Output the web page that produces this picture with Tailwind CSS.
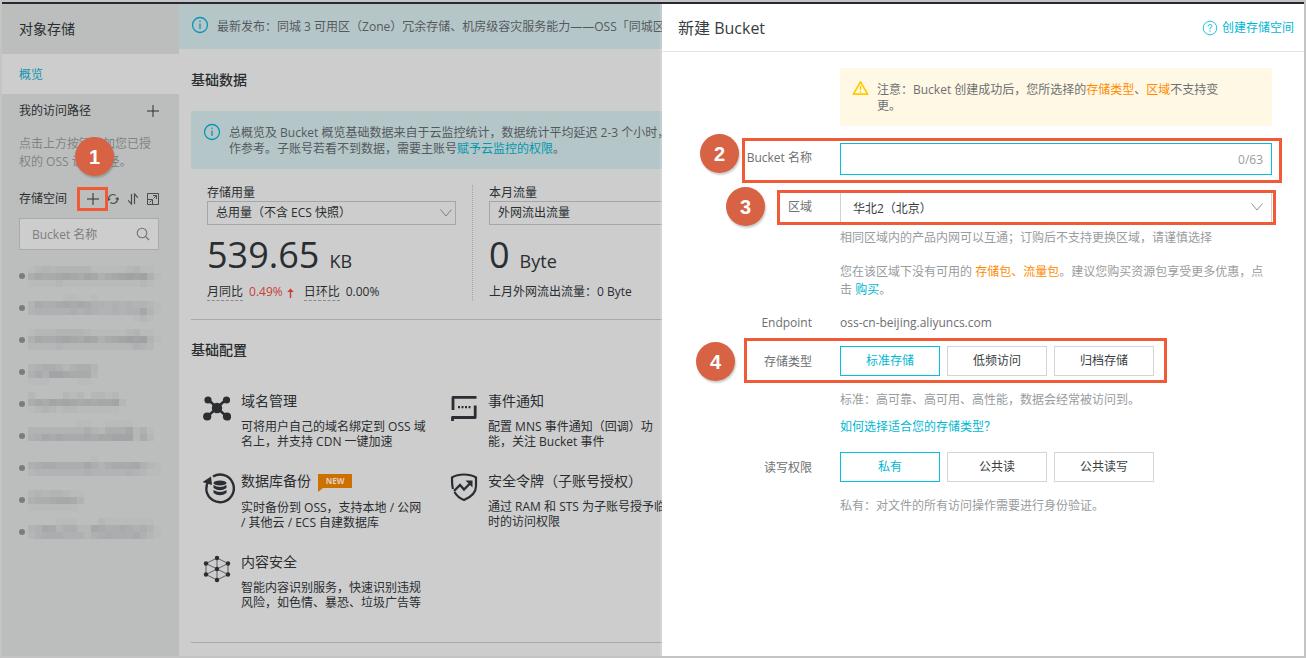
<!DOCTYPE html>
<html lang="zh-CN">
<head>
<meta charset="utf-8">
<meta name="viewport" content="width=device-width, initial-scale=1">
<title>对象存储 - 新建 Bucket</title>
<script src="https://cdn.jsdelivr.net/npm/@tailwindcss/browser@4"></script>
</head>
<body class="bg-[#c4c4c4] font-['Open_Sans','Noto_Sans_CJK_SC',sans-serif] text-xs leading-4 text-[#2a2e31]">
<div class="min-h-screen p-0.5 flex">
<div class="relative flex flex-1 border-t-2 border-[#262b33] overflow-hidden">

  <!-- Sidebar -->
  <aside class="w-[177px] shrink-0 bg-[#bbbebd]">
    <h1 class="h-[50px] pl-[17px] flex items-center text-sm">对象存储</h1>
    <a href="#" class="h-10 pl-[17px] pt-0.5 flex items-center bg-[#cdcdcd] text-[#0c96ae]">概览</a>
    <div class="pl-[17px] pr-5">
      <div class="mt-[9px] flex items-center justify-between">
        <span>我的访问路径</span>
        <button aria-label="添加路径" class="size-3">
          <svg viewBox="0 0 12 12" class="size-3" stroke="#2a2e31" fill="none"><path d="M6 0v12M0 6h12"/></svg>
        </button>
      </div>
      <div class="relative">
        <p class="mt-4 leading-[18px] text-[#818483] whitespace-nowrap">点击上方按钮添加您已授<br>权的 OSS 访问路径。</p>
        <span class="absolute left-14 top-0.5 size-[39px] rounded-full bg-[#d86344] shadow-[1px_2px_2px_rgba(0,0,0,0.2)] flex items-center justify-center font-['Liberation_Sans',sans-serif] font-bold text-xl text-white">1</span>
      </div>
      <div class="mt-5 flex items-center">
        <span class="mr-5">存储空间</span>
        <button aria-label="新建 Bucket" class="relative size-3 flex items-center justify-center">
          <svg viewBox="0 0 12 12" class="size-3" stroke="#2a2e31" fill="none"><path d="M6 0v12M0 6h12"/></svg>
          <span class="absolute -left-2.5 -top-1.5 w-[31px] h-6 border-3 border-[#f05a36]"></span>
        </button>
        <div class="flex flex-1 justify-end gap-2">
          <button aria-label="刷新" class="size-3">
            <svg viewBox="0 0 12 12" class="size-3" stroke="#4a4e50" stroke-width="1.2" fill="none"><path d="M1.6 7A4.5 4.5 0 0 1 8.6 2.4M10.4 5A4.5 4.5 0 0 1 3.4 9.6M0 5.4l1.6 1.8 1.8-1.6M12 6.6l-1.6-1.8-1.8 1.6"/></svg>
          </button>
          <button aria-label="排序" class="size-3">
            <svg viewBox="0 0 12 12" class="size-3" stroke="#4a4e50" stroke-width="1.2" fill="none"><path d="M4.5 1v10L1.2 7.4M7.5 11V1l3.3 3.6"/></svg>
          </button>
          <button aria-label="展开" class="size-3">
            <svg viewBox="0 0 12 12" class="size-3" stroke="#4a4e50" fill="none"><path d="M.5.5h11v11H.5zM6 2.5h3.5V6M9.500 2.500L6.500 5.500M.5 6.500h5v5M2.500 9.500l2-2"/></svg>
          </button>
        </div>
      </div>
      <label class="mt-[11px] h-8 flex items-center border border-[#a9abab] bg-[#cdcdcd] pl-3 pr-2">
        <input type="text" aria-label="搜索 Bucket" placeholder="Bucket 名称" class="min-w-0 flex-1 pt-0.5 outline-none placeholder:text-[#7b7e7f]">
        <svg viewBox="0 0 14 14" class="size-3.5" stroke="#6f7273" stroke-width="1.1" fill="none"><circle cx="6" cy="6" r="4.800"/><path d="M9.500 9.500l3.500 3.500"/></svg>
      </label>
      <ul id="buckets" class="mt-2.5"></ul>
    </div>
  </aside>

  <!-- Overview -->
  <main class="flex-1 min-w-0 bg-[#cdcdcd] whitespace-nowrap overflow-hidden">
    <div class="h-[45px] bg-[#b5c6c9] pl-3 flex items-center gap-2 text-[#54595c]">
      <svg viewBox="0 0 18 18" class="size-[18px] shrink-0 -mt-1" stroke="#0c96b4" fill="none" stroke-width="1.300"><circle cx="9" cy="9" r="7.500"/><path d="M9 7.500v5.500M9 4.500v1.500"/></svg>
      <span>最新发布：同城 3 可用区（Zone）冗余存储、机房级容灾服务能力——OSS「同城区域冗余存储」</span>
    </div>
    <div class="pl-3">
      <h2 class="mt-[21px] text-sm font-medium">基础数据</h2>
      <div class="mt-[21px] h-[58px] bg-[#b5c6c9] pl-3 flex gap-2 text-[#54595c]">
        <svg viewBox="0 0 18 18" class="size-[18px] shrink-0 mt-3" stroke="#0c96b4" fill="none" stroke-width="1.300"><circle cx="9" cy="9" r="7.500"/><path d="M9 7.500v5.500M9 4.500v1.500"/></svg>
        <p class="mt-3.5">总概览及 Bucket 概览基础数据来自于云监控统计，数据统计平均延迟 2-3 个小时，仅<br>作参考。子账号若看不到数据，需要主账号<a href="#" class="text-[#0098ae]">赋予云监控的权限</a>。</p>
      </div>
      <div class="mt-4 flex">
        <section class="w-[282px] shrink-0 pl-4 pr-4 border-r border-dotted border-[#a4a4a4]">
          <label for="usage">存储用量</label>
          <div class="relative">
            <select id="usage" class="block w-full h-6 appearance-none border border-[#a6a6a6] pl-2"><option>总用量（不含 ECS 快照）</option></select>
            <svg viewBox="0 0 12 8" class="absolute right-1 top-2 w-3 h-2 pointer-events-none" stroke="#7b7e80" fill="none"><path d="M.5.5L6 7 11.500.5"/></svg>
          </div>
          <div class="mt-1.5 h-12 flex items-baseline gap-2.5"><span class="text-4xl leading-12">539.65</span><span class="text-lg">KB</span></div>
          <div class="mt-[5px] flex text-[#2a2e31]">
            <span class="border-b border-dashed border-[#8b8b8b]">月同比</span>
            <span class="ml-1.5 text-[#c93f36]">0.49%</span>
            <svg viewBox="0 0 7 10" class="w-[7px] h-2.5 mt-1 ml-1" stroke="#c93f36" stroke-width="1.400" fill="#c93f36"><path d="M3.500 10V2"/><path d="M.2 4L3.500.4l3.300 3.600z" stroke="none"/></svg>
            <span class="ml-2.5 border-b border-dashed border-[#8b8b8b]">日环比</span>
            <span class="ml-1.5">0.00%</span>
          </div>
        </section>
        <section class="w-[282px] shrink-0 px-4">
          <label for="traffic">本月流量</label>
          <select id="traffic" class="block w-full h-6 appearance-none border border-[#a6a6a6] pl-2"><option>外网流出流量</option></select>
          <div class="mt-1.5 h-12 flex items-baseline gap-2.5"><span class="text-4xl leading-12">0</span><span class="text-lg">Byte</span></div>
          <p class="mt-[5px]">上月外网流出流量：0 Byte</p>
        </section>
      </div>
      <hr class="mt-[18px] border-[#a9a9a9]">
      <h2 class="mt-5 text-sm font-medium">基础配置</h2>
      <div class="mt-[31px] flex">
        <div class="w-[247px] shrink-0 pl-3 flex flex-col gap-[22px]">
          <article class="flex gap-2.5">
            <svg viewBox="0 0 28 28" class="size-7 shrink-0 mt-[3px]" fill="#2a2e33" stroke="#2a2e33"><path d="M5 5.500l18 16.500M23 5.500L5 22" stroke-width="2.400"/><g stroke="none"><circle cx="14" cy="14" r="5.200"/><circle cx="5" cy="6" r="3.600"/><circle cx="23.500" cy="6" r="3.600"/><circle cx="4.200" cy="22.500" r="4.100"/><circle cx="24" cy="22.500" r="4.100"/></g></svg>
            <div><h3 class="text-sm">域名管理</h3><p class="mt-2 leading-[15px]">可将用户自己的域名绑定到 OSS 域<br>名上，并支持 CDN 一键加速</p></div>
          </article>
          <article class="flex gap-1.5">
            <svg viewBox="0 0 32 32" class="size-8 shrink-0 mt-px" fill="none" stroke="#2a2e33"><path d="M10 4.500A13.800 13.800 0 1 1 3.500 19Q2.800 13.500 5.500 9" stroke-width="2.400"/><path d="M-.5 10L8 4.500 9 13z" fill="#2a2e33" stroke="none"/><g fill="#2a2e33" stroke="none"><ellipse cx="17" cy="11" rx="6.500" ry="2.500"/><path d="M10.500 13q6.500 4 13 0v3q-6.500 4.500-13 0zM10.500 18q6.500 4 13 0v3q-6.500 4.500-13 0z"/></g></svg>
            <div><h3 class="text-sm flex items-center gap-[7px]">数据库备份
              <span class="relative h-3.5 w-[34px] bg-[#cc7000] text-[8px] leading-[14px] font-bold text-center text-[#e2d3c2]">NEW<svg viewBox="0 0 5 4" class="absolute left-0 top-3.5 w-[5px] h-1" fill="#cc7000"><path d="M0 0h5L0 4z"/></svg></span></h3>
              <p class="mt-[9px] leading-[15px]">实时备份到 OSS，支持本地 / 公网<br>/ 其他云 / ECS 自建数据库</p></div>
          </article>
          <article class="flex gap-2.5">
            <svg viewBox="0 0 28 28" class="size-7 shrink-0 mt-[3px]" fill="#2a2e33" stroke="#2a2e33" stroke-width=".7"><path d="M14 3L25 8.500v11L14 25 3 19.500v-11zM14 3v22M3 8.500l22 11M25 8.500l-22 11" fill="none"/><g stroke="none"><circle cx="14" cy="3" r="2.200"/><circle cx="25" cy="8.500" r="2.200"/><circle cx="25" cy="19.500" r="2.200"/><circle cx="14" cy="25" r="2.200"/><circle cx="3" cy="19.500" r="2.200"/><circle cx="3" cy="8.500" r="2.200"/><circle cx="14" cy="14" r="2.200"/></g></svg>
            <div><h3 class="text-sm">内容安全</h3><p class="mt-2 leading-[15px]">智能内容识别服务，快速识别违规<br>风险，如色情、暴恐、垃圾广告等</p></div>
          </article>
        </div>
        <div class="pl-3 flex flex-col gap-[22px]">
          <article class="flex gap-2.5">
            <svg viewBox="0 0 28 28" class="size-7 shrink-0 mt-[3px]" fill="none" stroke="#2a2e33" stroke-width="2.800" stroke-linejoin="round"><path d="M26.500 3.400H3V16M25.200 11.500v12H2.500V27"/><path d="M8 13.200h2m1.500 0h2m1.500 0h2m1.500 0h2" stroke-width="2.200"/></svg>
            <div><h3 class="text-sm">事件通知</h3><p class="mt-2 leading-[15px]">配置 MNS 事件通知（回调）功<br>能，关注 Bucket 事件</p></div>
          </article>
          <article class="flex gap-2.5">
            <svg viewBox="0 0 28 28" class="size-7 shrink-0 mt-0.5" fill="none" stroke="#2a2e33" stroke-width="2.200"><path d="M3 16Q2 13 2 4.500 7 1.500 14 1.500t12 3V13q0 9-12 14Q8 25 4.500 19"/><path d="M4 18l6-6 4 4.500 7-7" stroke-width="2.400"/><path d="M15.500 7.500h7v7z" fill="#2a2e33" stroke="none"/></svg>
            <div><h3 class="text-sm">安全令牌（子账号授权）</h3><p class="mt-2 leading-[15px]">通过 RAM 和 STS 为子账号授予临<br>时的访问权限</p></div>
          </article>
        </div>
      </div>
      <hr class="mt-8 border-[#a9a9a9]">
    </div>
  </main>

  <!-- Drawer -->
  <section class="absolute inset-y-0 right-0 w-[642px] bg-white text-[#6d7072] shadow-[-2px_0_1px_rgba(255,255,255,0.15)]">
    <header class="h-12 border-b border-[#e4e6e6] pl-4 pr-2.5 flex items-center justify-between">
      <h2 class="text-base text-[#373d41]">新建 Bucket</h2>
      <a href="#" class="flex items-center gap-1 text-[#00b7d3]">
        <svg viewBox="0 0 16 16" class="size-4" fill="none" stroke="#20c3dc"><circle cx="8" cy="8" r="6.800"/><path d="M6 6.500Q6 4.500 8 4.500t2 1.800Q10 7.300 8 8.200v1.300M8 10.500v1.300"/></svg>
        创建存储空间</a>
    </header>
    <form class="pt-4 pr-8">
      <div class="ml-[178px] h-[58px] bg-[#fff8e4] pl-3 pr-10 flex gap-2">
        <svg viewBox="0 0 18 16" class="w-[17px] h-4 shrink-0 mt-3" fill="none" stroke="#ffc800" stroke-width="1.800" stroke-linejoin="round"><path d="M9 1.500L16.500 14.500h-15z"/><path d="M9 5.500v4.500M9 11.200v1.500" stroke-width="1.500"/></svg>
        <p class="mt-3.5">注意：Bucket 创建成功后，您所选择的<span class="text-[#ff8a00]">存储类型</span>、<span class="text-[#ff8a00]">区域</span>不支持变<br>更。</p>
      </div>

      <div class="relative mt-[17px] flex gap-7">
        <label for="name" class="w-[150px] shrink-0 mt-[7px] text-right">Bucket 名称</label>
        <div class="relative flex-1">
          <input id="name" type="text" maxlength="63" class="block w-full h-8 border border-[#00c1de] pl-3 pr-12 outline-none">
          <span class="absolute right-[9px] top-[9px] text-[#999c9e]">0/63</span>
        </div>
        <span class="absolute left-20 -right-2.5 -top-[5px] h-[45px] border-3 border-[#f05a36] pointer-events-none"></span>
        <span class="absolute left-[38px] -top-[9px] size-[39px] rounded-full bg-[#d86344] shadow-[1px_2px_2px_rgba(0,0,0,0.2)] flex items-center justify-center font-['Liberation_Sans',sans-serif] font-bold text-xl text-white">2</span>
      </div>

      <div class="relative mt-4 flex gap-7">
        <label for="region" class="w-[150px] shrink-0 mt-2 text-right">区域</label>
        <div class="relative flex-1">
          <select id="region" class="block w-full h-8 appearance-none border border-[#d0d3d4] pl-3 pt-1 text-[#373d41]"><option>华北2（北京）</option></select>
          <svg viewBox="0 0 12 8" class="absolute right-[9px] top-3 w-3 h-2 pointer-events-none" stroke="#8f9294" fill="none"><path d="M.5.5L6 7 11.500.5"/></svg>
        </div>
        <span class="absolute left-[115px] -right-1 -top-px h-[35px] border-3 border-[#f05a36] pointer-events-none"></span>
        <span class="absolute left-16 -top-1 size-[39px] rounded-full bg-[#d86344] shadow-[1px_2px_2px_rgba(0,0,0,0.2)] flex items-center justify-center font-['Liberation_Sans',sans-serif] font-bold text-xl text-white">3</span>
      </div>
      <p class="ml-[178px] mt-[7px] text-[#999c9e]">相同区域内的产品内网可以互通；订购后不支持更换区域，请谨慎选择</p>
      <p class="ml-[178px] mt-[17px] leading-[18px] text-[#999c9e]">您在该区域下没有可用的 <a href="#" class="text-[#ff8a00]">存储包、流量包</a>。建议您购买资源包享受更多优惠，点<br>击 <a href="#" class="text-[#00b7d3]">购买</a>。</p>

      <div class="mt-4 flex gap-7">
        <span class="w-[150px] shrink-0 text-right">Endpoint</span>
        <span>oss-cn-beijing.aliyuncs.com</span>
      </div>

      <div class="relative mt-[15px] flex gap-7">
        <span id="type" class="w-[150px] shrink-0 mt-2 text-right">存储类型</span>
        <div role="group" aria-labelledby="type" class="flex gap-[7px] text-[#373d41]">
          <button type="button" class="w-[100px] h-[30px] border border-[#00c1de] text-[#00b7d3]">标准存储</button>
          <button type="button" class="w-[100px] h-[30px] border border-[#d3d5d6]">低频访问</button>
          <button type="button" class="w-[100px] h-[30px] border border-[#d3d5d6]">归档存储</button>
        </div>
        <span class="absolute left-[82px] -top-2 w-[423px] h-[45px] border-3 border-[#f05a36] pointer-events-none"></span>
        <span class="absolute left-[34px] -top-1 size-[39px] rounded-full bg-[#d86344] shadow-[1px_2px_2px_rgba(0,0,0,0.2)] flex items-center justify-center font-['Liberation_Sans',sans-serif] font-bold text-xl text-white">4</span>
      </div>
      <p class="ml-[178px] mt-4 text-[#999c9e]">标准：高可靠、高可用、高性能，数据会经常被访问到。</p>
      <a href="#" class="block ml-[178px] mt-[11px] text-[#00b7d3]">如何选择适合您的存储类型？</a>

      <div class="mt-[17px] flex gap-7">
        <span id="acl" class="w-[150px] shrink-0 mt-2 text-right">读写权限</span>
        <div role="group" aria-labelledby="acl" class="flex gap-[7px] text-[#373d41]">
          <button type="button" class="w-[100px] h-[30px] border border-[#00c1de] text-[#00b7d3]">私有</button>
          <button type="button" class="w-[100px] h-[30px] border border-[#d3d5d6]">公共读</button>
          <button type="button" class="w-[100px] h-[30px] border border-[#d3d5d6]">公共读写</button>
        </div>
      </div>
      <p class="ml-[178px] mt-4 text-[#999c9e]">私有：对文件的所有访问操作需要进行身份验证。</p>
    </form>
  </section>
</div>
</div>

<script>
// Masked bucket names: top offset and mosaic strips, one digit per 7px cell (darkness 0-9)
const masks = [
  [6, ['1232333331111123110', '5766787687467898941', '1111211111111111210']],
  [2, ['0000011001000000000', '3655676764434343321', '3444445454334344731', '0000000000000001210']],
  [5, ['1222333321111123110', '4766787687467898931', '2222322222222224320']],
  [1, ['0000000000', '3455424553', '4648876662', '1110000110']],
  [4, ['20000212022120', '57687876767782', '12321221111110']],
  [0, ['000000011001111000', '333333335325557241', '457676667677888262']],
  [3, ['0000000001000000000', '4566555575356667421', '2333333343333343211']],
  [6, ['23233211', '45567763', '11111110']],
  [2, ['0000111000211111110', '3476355227655654531', '2455544424565556421']]
];
document.getElementById('buckets').innerHTML = masks.map(([top, rows]) =>
  '<li class="h-8 flex items-center gap-[3px]"><span class="size-1.5 shrink-0 rounded-full bg-[#7b7d7d]"></span>' +
  '<svg viewBox="0 0 133 32" class="w-[133px] h-8 shrink-0" shape-rendering="crispEdges" fill="#7c7a82">' +
  rows.map((r, y) => [...r].map((v, x) =>
    `<rect x="${x * 7}" y="${top + y * 7}" width="7" height="7" fill-opacity="${v * 0.048}"/>`).join('')).join('') +
  '</svg></li>').join('');
</script>
</body>
</html>
